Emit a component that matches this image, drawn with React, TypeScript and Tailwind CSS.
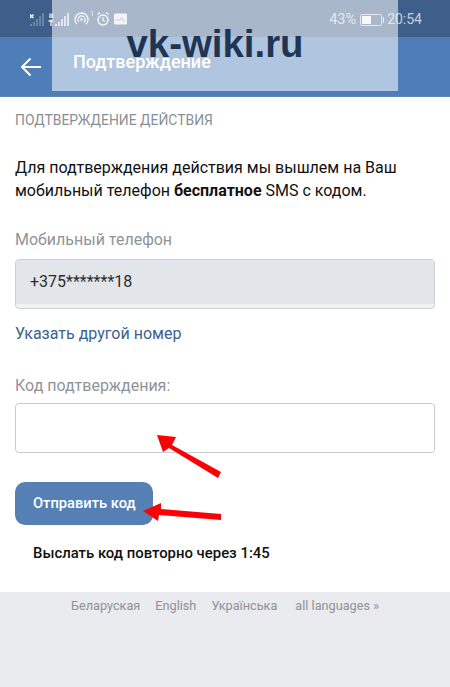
const fontRoboto = { fontFamily: "Roboto, sans-serif" };

function SignalIcons() {
  return (
    <svg width="100" height="16" viewBox="0 0 100 16" fill="none" className="block">
      {/* sim 1 */}
      <path d="M0 3.500l3.500 3.500M3.500 3.500L0 7" stroke="#ffffff" strokeWidth="1.300" />
      <path d="M1 13v2M4 11v4M7 8v7M10 5v10M13 2v13" stroke="#ffffff" strokeOpacity="0.35" strokeWidth="1.400" />
      {/* sim 2 */}
      <rect x="19" y="2.500" width="4.500" height="4.500" fill="#ffffff" fillOpacity="0.6" />
      <path d="M18.500 10h5M21 8.500v6.500" stroke="#ffffff" strokeOpacity="0.9" strokeWidth="1.300" />
      <path d="M26 13v2M29 11v4M32 8v7M35 5v10M38 2v13" stroke="#ffffff" strokeOpacity="0.85" strokeWidth="1.600" />
      {/* hotspot */}
      <circle cx="51.500" cy="8.500" r="6.500" stroke="#ffffff" strokeOpacity="0.85" strokeWidth="1.400" strokeDasharray="30 11" transform="rotate(137 51.500 8.500)" />
      <circle cx="51.500" cy="8.500" r="3.500" stroke="#ffffff" strokeOpacity="0.85" strokeWidth="1.300" strokeDasharray="16 6" transform="rotate(137 51.500 8.500)" />
      <circle cx="51.500" cy="8.500" r="1.200" fill="#ffffff" fillOpacity="0.9" />
      <text x="60" y="5" fontSize="7" fill="#ffffff" fillOpacity="0.8" fontFamily="Roboto, sans-serif">1</text>
      {/* alarm */}
      <circle cx="73" cy="9" r="5" stroke="#ffffff" strokeOpacity="0.9" strokeWidth="1.400" />
      <path d="M73 6v3.200l2 1.400M67.500 3.500l2.500-2M78.500 3.500l-2.500-2" stroke="#ffffff" strokeOpacity="0.9" strokeWidth="1.200" />
      {/* picture */}
      <rect x="84" y="2.500" width="13" height="11" rx="1" fill="#ffffff" fillOpacity="0.85" />
      <path d="M85 10l2.500-2 2 2 2-4 2 4 2-1" stroke="#7f95ad" strokeWidth="1" />
    </svg>
  );
}

function Arrows() {
  return (
    <svg width="450" height="687" viewBox="0 0 450 687" className="absolute left-0 top-0 pointer-events-none">
      <path d="M157 435L176 437L172 445L221 472L218 478L169 448L163 452Z" fill="#fb0007" />
      <path d="M143 511L161 503L161 509L221 514L221 520L159 515L158 521Z" fill="#fb0007" />
    </svg>
  );
}

export default function App() {
  return (
    <div className="relative w-[450px] h-[687px] overflow-hidden bg-white" style={fontRoboto}>
      {/* status bar */}
      <div className="h-[37px] bg-[#3e5f8a] flex items-center pl-[30px] pr-[28px] justify-between">
        <SignalIcons />
        <div className="flex items-center mt-[2px] text-[14.500px] text-white/70">
          <span>43%</span>
          <div className="ml-[4px] w-[22px] h-[12px] border border-white/70 rounded-[2px] p-[1px]">
            <div className="w-[9px] h-full bg-white/90" />
          </div>
          <div className="ml-[1px] w-[1px] h-[6px] bg-white/80" />
          <span className="ml-[3px] text-[14px]">20:54</span>
        </div>
      </div>

      {/* header */}
      <div className="h-[60px] bg-[#4f7db7] flex items-center pl-[20px] border-b border-[#5a86bb]">
        <svg width="22" height="20" viewBox="0 0 22 20" fill="none">
          <path d="M21 10H2M10.500 1.500L2 10l8.500 8.500" stroke="#ffffff" strokeWidth="2" />
        </svg>
        <span className="ml-[31px] mb-[10px] text-[18px] font-medium text-white">Подтверждение</span>
      </div>

      {/* content */}
      <div className="h-[495px] bg-white px-[15px]">
        <div className="pt-[15px] text-[13.900px] leading-[16px] text-[#8a8f95]">ПОДТВЕРЖДЕНИЕ ДЕЙСТВИЯ</div>
        <p className="mt-[28px] text-[16px] leading-[23px] text-[#111111]">
          Для подтверждения действия мы вышлем на Ваш мобильный телефон <b className="font-bold">бесплатное</b> SMS с кодом.
        </p>
        <div className="mt-[28px] text-[16px] leading-[19px] text-[#8f9499]">Мобильный телефон</div>
        <div className="mt-[10px] h-[50px] rounded-[4px] border border-[#cdd0d4] bg-[#f1f2f4] overflow-hidden">
          <div className="h-[44px] bg-[#e2e5ea] flex items-center px-[14px] text-[16px] text-[#2c2d2e]">
            +375*******18
          </div>
        </div>
        <div className="mt-[15px] text-[16px] leading-[19px] text-[#3c628e]">Указать другой номер</div>
        <div className="mt-[33px] text-[16px] leading-[19px] text-[#8f9499]">Код подтверждения:</div>
        <div className="mt-[8px] h-[50px] rounded-[4px] border border-[#c9cbce] bg-white" />
        <button className="mt-[29px] block w-[138px] h-[43px] rounded-[10px] bg-[#5580b6] text-[14.700px] font-medium text-white text-left pl-[18px]">
          Отправить код
        </button>
        <div className="mt-[20px] ml-[18px] text-[14.900px] leading-[17px] font-medium text-[#111111]">
          Выслать код повторно через 1:45
        </div>
      </div>

      {/* footer */}
      <div className="h-[95px] bg-[#eaebef] flex pl-[71px] pt-[6px] text-[12.700px] leading-[16px] text-[#8f9296]">
        <span>Беларуская</span>
        <span className="ml-[15px]">English</span>
        <span className="ml-[15px]">Українська</span>
        <span className="ml-[18px]">all languages »</span>
      </div>

      <Arrows />

      {/* watermark */}
      <div className="absolute left-[52px] top-0 w-[346px] h-[91px] bg-white/55 flex justify-center pr-[20px]">
        <span className="mt-[22px] text-[38.400px] leading-[44px] font-bold text-[#1f3554]" style={{ fontFamily: '"Liberation Sans", sans-serif' }}>
          vk-wiki.ru
        </span>
      </div>
    </div>
  );
}
